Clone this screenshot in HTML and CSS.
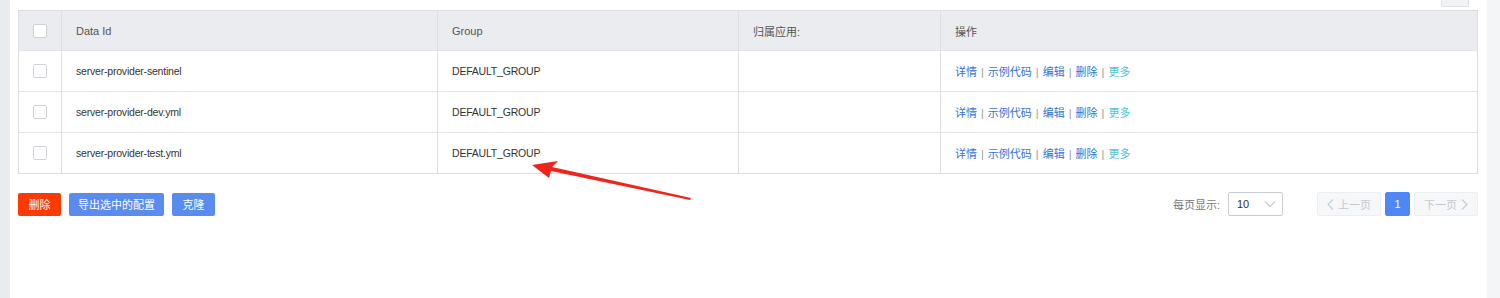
FILE: index.html
```html
<!doctype html>
<html>
<head>
<meta charset="utf-8">
<title>配置列表</title>
<link rel="stylesheet" href="styles.css">
</head>
<body>
<div class="page">
  <div class="side"></div>
  <div class="main">
    <div class="topbar"><span class="mini-btn"></span></div>
    <table class="cfg-table">
      <thead>
        <tr>
          <th class="c-check"><span class="box"></span></th>
          <th class="c-id">Data Id</th>
          <th class="c-group">Group</th>
          <th class="c-app">归属应用:</th>
          <th class="c-op">操作</th>
        </tr>
      </thead>
      <tbody>
        <tr>
          <td class="c-check"><span class="box"></span></td>
          <td>server-provider-sentinel</td>
          <td>DEFAULT_GROUP</td>
          <td></td>
          <td class="ops"><a>详情</a><i>|</i><a>示例代码</a><i>|</i><a>编辑</a><i>|</i><a>删除</a><i>|</i><a class="more">更多</a></td>
        </tr>
        <tr>
          <td class="c-check"><span class="box"></span></td>
          <td>server-provider-dev.yml</td>
          <td>DEFAULT_GROUP</td>
          <td></td>
          <td class="ops"><a>详情</a><i>|</i><a>示例代码</a><i>|</i><a>编辑</a><i>|</i><a>删除</a><i>|</i><a class="more">更多</a></td>
        </tr>
        <tr>
          <td class="c-check"><span class="box"></span></td>
          <td>server-provider-test.yml</td>
          <td>DEFAULT_GROUP</td>
          <td></td>
          <td class="ops"><a>详情</a><i>|</i><a>示例代码</a><i>|</i><a>编辑</a><i>|</i><a>删除</a><i>|</i><a class="more">更多</a></td>
        </tr>
      </tbody>
    </table>
    <div class="footer">
      <div class="actions">
        <button class="btn red w43">删除</button>
        <button class="btn blue w94">导出选中的配置</button>
        <button class="btn blue w43">克隆</button>
      </div>
      <div class="pager">
        <span class="label">每页显示:</span>
        <span class="select">10<svg width="12" height="8" viewBox="0 0 12 8"><path d="M1 1.5 6 6.5 11 1.5" fill="none" stroke="#9aa0a8" stroke-width="1"/></svg></span>
        <span class="pg prev"><svg width="7" height="11" viewBox="0 0 7 11"><path d="M6 0.5 1 5.5 6 10.5" fill="none" stroke="#c8ccd2" stroke-width="1.2"/></svg>上一页</span>
        <span class="pg cur">1</span>
        <span class="pg next">下一页<svg width="7" height="11" viewBox="0 0 7 11"><path d="M1 0.5 6 5.5 1 10.5" fill="none" stroke="#c8ccd2" stroke-width="1.2"/></svg></span>
      </div>
    </div>
    <svg class="arrow" width="170" height="45" viewBox="0 0 170 45">
      <path d="M0 4 L26 0 L20 6 L159 37 L158 39 L19 10 L17 17 Z" fill="#f2231b"/>
    </svg>
  </div>
  <div class="side-r"></div>
</div>
</body>
</html>
```
FILE: styles.css
```css
*{ margin:0; padding:0; box-sizing:border-box}
body{ background:#fff; font-family:"Liberation Sans","Noto Sans CJK SC",sans-serif; font-size:11px; color:#333}
.page{ display:flex; width:1500px; height:298px; overflow:hidden}
.side{ width:10px; background:#e9ecef}
.side-r{ width:13px; background:#f4f5f6}
.main{ flex:1; position:relative; padding:0 9px 0 8px}
.topbar{ height:10px; display:flex; justify-content:flex-end}
.mini-btn{ width:28px; height:7px; margin-right:9px; background:#f2f3f5; border:1px solid #dcdfe3; border-top:none; border-radius:0 0 2px 2px}
.cfg-table{ width:1460px; border-collapse:collapse; table-layout:fixed; border:1px solid #dcdee2}
.cfg-table th{ height:40px; background:#ebecef; font-weight:normal; text-align:left; color:#555; padding-left:14px; border-left:1px solid #dcdee2}
.cfg-table td{ height:41px; text-align:left; padding-left:14px; color:#333; font-size:10.5px; letter-spacing:-0.2px; border-left:1px solid #dcdee2; border-top:1px solid #e3e5e8}
.cfg-table .c-check{ width:43px; padding-left:14px; border-left:none}
.cfg-table .c-id{ width:376px}
.cfg-table .c-group{ width:301px}
.cfg-table .c-app{ width:202px}
.box{ display:block; width:14px; height:14px; background:#fff; border:1px solid #cfd3d8; border-radius:2px}
.cfg-table td.ops{ font-size:11px; letter-spacing:0}
.ops a{ color:#2f74d9; cursor:pointer}
.ops a.more{ color:#4ec3d7}
.ops i{ font-style:normal; color:#999; margin:0 4px}
.footer{ display:flex; justify-content:space-between; align-items:center; margin-top:18px; width:1460px}
.actions{ display:flex; gap:8px}
.btn{ height:23px; border:none; border-radius:2px; color:#fff; font-size:11px; font-family:inherit; text-align:center}
.w43{ width:43px}
.w94{ width:95px}
.btn.red{ background:#ff3a00}
.btn.blue{ background:#5a8cf0}
.pager{ display:flex; align-items:center}
.label{ color:#777; margin-right:8px}
.select{ width:55px; height:24px; border:1px solid #c9ccd1; border-radius:2px; display:flex; align-items:center; justify-content:space-between; padding:0 6px 0 8px; color:#333; margin-right:34px}
.pg{ height:24px; display:flex; align-items:center; justify-content:center; border-radius:2px; color:#c5c9cf; background:#f6f7f9; border:1px solid #eceef1; gap:4px}
.prev{ width:64px}
.next{ width:64px}
.cur{ width:25px; background:#4f87f5; border-color:#4f87f5; color:#fff; margin:0 4px}
.arrow{ position:absolute; left:522px; top:161px}
```
